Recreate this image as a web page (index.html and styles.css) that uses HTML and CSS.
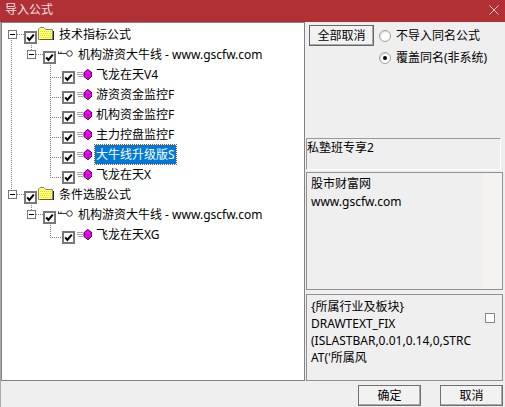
FILE: index.html
```html
<!DOCTYPE html>
<html lang="zh">
<head>
<meta charset="utf-8">
<title>导入公式</title>
<link rel="stylesheet" href="styles.css">
</head>
<body>
<svg class="defs" width="0" height="0" aria-hidden="true">
  <defs>
    <symbol id="check" viewBox="0 0 13 13">
      <rect x="1" y="1" width="11" height="11" fill="#fff" stroke="#777" stroke-width="2"/>
      <path d="M3.2 6.3 L5.4 9 L9.8 3.6" fill="none" stroke="#000" stroke-width="2"/>
    </symbol>
    <symbol id="folder" viewBox="0 0 16 13">
      <path d="M.5 12.5 V2 L2 .5 H6 L7.5 2.5 H14.5 V12.5 Z" fill="#ffff66" stroke="#8a8a70"/>
      <path d="M2 4.5 H14 M3 6.5 H14 M2 8.5 H14 M3 10.5 H14" stroke="#d8d060" stroke-dasharray="1 1"/>
      <path d="M15.5 4 V13 H2" fill="none" stroke="#222"/>
    </symbol>
    <symbol id="key" viewBox="0 0 15 7">
      <circle cx="11.5" cy="3.5" r="2.8" fill="#fff" stroke="#333"/>
      <path d="M0 3.5 H9 M.5 3.5 V1.5 M3 3.5 V1.5" fill="none" stroke="#333"/>
    </symbol>
    <symbol id="gem" viewBox="0 0 15 11">
      <path d="M0 3.5 H6 M0 5.5 H6 M1 7.5 H6" stroke="#8fa0a0" stroke-width=".9"/>
      <path d="M10.5 .3 L15 3.8 V7 L11 10.7 L7 7.6 V3.8 Z" fill="#ff00ff" stroke="#300030" stroke-width="1"/>
      <path d="M8 4.5 L11 6.5 L14 4.2 M11 6.5 V9.5" fill="none" stroke="#900090" stroke-width=".8"/>
    </symbol>
    <symbol id="minus" viewBox="0 0 9 9">
      <rect x=".5" y=".5" width="8" height="8" fill="#fff" stroke="#777"/>
      <path d="M2 4.5 H7" stroke="#000"/>
    </symbol>
  </defs>
</svg>
<div class="window">
  <header class="titlebar">
    <span class="title">导入公式</span>
    <svg class="close" width="10" height="10" viewBox="0 0 10 10"><path d="M.5 .5 L9.5 9.5 M9.5 .5 L.5 9.5" stroke="#e8c8c8" fill="none"/></svg>
  </header>
  <div class="body">
    <div class="tree">
      <span class="vline trunk"></span>
      <span class="vline link-a"></span>
      <span class="vline branch-a"></span>
      <span class="vline link-b"></span>
      <span class="vline branch-b"></span>
      <div class="row lvl0"><svg class="exp"><use href="#minus"/></svg><svg class="cb"><use href="#check"/></svg><svg class="folder"><use href="#folder"/></svg><span class="label">技术指标公式</span></div>
      <div class="row lvl1"><svg class="exp"><use href="#minus"/></svg><svg class="cb"><use href="#check"/></svg><svg class="key"><use href="#key"/></svg><span class="label">机构游资大牛线 - www.gscfw.com</span></div>
      <div class="row lvl2"><svg class="cb"><use href="#check"/></svg><svg class="gem"><use href="#gem"/></svg><span class="label">飞龙在天V4</span></div>
      <div class="row lvl2"><svg class="cb"><use href="#check"/></svg><svg class="gem"><use href="#gem"/></svg><span class="label">游资资金监控F</span></div>
      <div class="row lvl2"><svg class="cb"><use href="#check"/></svg><svg class="gem"><use href="#gem"/></svg><span class="label">机构资金监控F</span></div>
      <div class="row lvl2"><svg class="cb"><use href="#check"/></svg><svg class="gem"><use href="#gem"/></svg><span class="label">主力控盘监控F</span></div>
      <div class="row lvl2"><svg class="cb"><use href="#check"/></svg><svg class="gem"><use href="#gem"/></svg><span class="label selected">大牛线升级版S</span></div>
      <div class="row lvl2"><svg class="cb"><use href="#check"/></svg><svg class="gem"><use href="#gem"/></svg><span class="label">飞龙在天X</span></div>
      <div class="row lvl0"><svg class="exp"><use href="#minus"/></svg><svg class="cb"><use href="#check"/></svg><svg class="folder"><use href="#folder"/></svg><span class="label">条件选股公式</span></div>
      <div class="row lvl1"><svg class="exp"><use href="#minus"/></svg><svg class="cb"><use href="#check"/></svg><svg class="key"><use href="#key"/></svg><span class="label">机构游资大牛线 - www.gscfw.com</span></div>
      <div class="row lvl2"><svg class="cb"><use href="#check"/></svg><svg class="gem"><use href="#gem"/></svg><span class="label">飞龙在天XG</span></div>
    </div>
    <div class="side">
      <div class="options">
        <button class="btn btn-all">全部取消</button>
        <div class="radios">
          <div class="radio-row"><span class="radio"></span>不导入同名公式</div>
          <div class="radio-row"><span class="radio on"></span>覆盖同名(非系统)</div>
        </div>
      </div>
      <div class="name-box">私塾班专享2</div>
      <div class="info-box"><p>股市财富网</p><p>www.gscfw.com</p></div>
      <div class="code-box">
        <div class="code">{所属行业及板块}<br>DRAWTEXT_FIX<br>(ISLASTBAR,0.01,0.14,0,STRC<br>AT('所属风</div>
        <span class="mini-check"></span>
      </div>
    </div>
  </div>
  <footer class="actions">
    <button class="btn btn-act">确定</button>
    <button class="btn btn-act">取消</button>
  </footer>
</div>
</body>
</html>
```

FILE: styles.css
```css
* { box-sizing: border-box; }
html, body { margin: 0; padding: 0; }
body { width: 505px; height: 407px; overflow: hidden; background: #efefef; font: 12px/20px "Noto Sans", "Noto Sans CJK SC", sans-serif; color: #000; }
.defs { position: absolute; }
.window { width: 505px; height: 407px; display: flex; flex-direction: column; border-left: 1px solid #a8a8a8; }
.titlebar { height: 22px; margin-left: -1px; flex: none; background: #b03035; color: #f3e3e3; display: flex; align-items: center; justify-content: space-between; padding: 0 6px 2px 5px; }
.title { font-size: 12px; }
.body { display: flex; flex: none; height: 360px; }
.tree { width: 304px; height: 359px; border: 1px solid #828282; background: #fff; padding-top: 1px; flex: none; position: relative; }
.vline { position: absolute; width: 1px; background: repeating-linear-gradient(to bottom, #808080 0 1px, transparent 1px 2px); }
.trunk { left: 9px; top: 15px; height: 152px; }
.link-a { left: 29px; top: 20px; height: 8px; }
.branch-a { left: 48px; top: 40px; height: 113px; }
.link-b { left: 29px; top: 180px; height: 8px; }
.branch-b { left: 48px; top: 200px; height: 14px; }
.row { height: 20px; display: flex; align-items: center; position: relative; white-space: nowrap; }
.row::before { content: ""; position: absolute; height: 1px; background: repeating-linear-gradient(to right, #808080 0 1px, transparent 1px 2px); }
.lvl0::before { left: 15px; width: 7px; top: 10px; }
.lvl1::before { left: 34px; width: 7px; top: 10px; }
.lvl2::before { left: 48px; width: 12px; top: 13px; }
.lvl0 { padding-left: 6px; }
.lvl1 { padding-left: 25px; }
.lvl2 { padding-left: 60px; }
.exp { width: 9px; height: 9px; margin-right: 7px; flex: none; }
.cb { width: 13px; height: 13px; margin-top: 6px; flex: none; }
.folder { width: 16px; height: 13px; margin: -2px 4px 0 1px; flex: none; }
.key { width: 15px; height: 7px; margin: -2px 4px 0 2px; flex: none; }
.gem { width: 15px; height: 11px; margin: 0 3px 0 2px; flex: none; }
.label { padding: 0 1px; line-height: 19px; }
.selected { background: #0078d7; color: #fff; outline: 1px dotted #b05000; }
.side { flex: 1; min-width: 0; padding: 3px 2px 0 1px; display: flex; flex-direction: column; }
.options { display: flex; height: 113px; align-items: flex-start; }
.btn { font: inherit; background: #f2f2f2; border: 1px solid #666; box-shadow: inset -1px -1px 0 #aaa; padding: 0; color: #000; }
.btn-all { width: 65px; height: 21px; margin-left: 3px; }
.radios { margin-left: 5px; }
.radio-row { display: flex; align-items: center; height: 22px; gap: 5px; }
.radio { width: 12px; height: 12px; border-radius: 50%; background: #fff; border: 1px solid #a0a0a0; box-shadow: inset 1px 1px 1px #ddd; position: relative; }
.radio.on::after { content: ""; position: absolute; left: 3px; top: 3px; width: 4px; height: 4px; border-radius: 50%; background: #000; }
.name-box { height: 32px; border: 1px solid #999; border-right-color: #fff; border-bottom-color: #fff; line-height: 18px; margin-right: 2px; }
.info-box { height: 118px; margin-top: 2px; border: 1px solid #909090; padding: 2px 4px; background: linear-gradient(to right, #efefef 176px, #f4f3f1 176px); }
.info-box p { margin: 0; line-height: 18px; }
.code-box { height: 87px; margin-top: 4px; border: 1px solid #909090; padding: 3px 4px; display: flex; justify-content: space-between; position: relative; }
.code { line-height: 17px; white-space: nowrap; }
.mini-check { position: absolute; right: 7px; top: 18px; width: 10px; height: 10px; background: #fff; border: 1px solid #888; }
.actions { flex: 1; display: flex; justify-content: flex-end; align-items: flex-start; gap: 19px; padding: 3px 2px 0 0; }
.btn-act { width: 63px; height: 21px; border: 1px solid #707070; }
```
